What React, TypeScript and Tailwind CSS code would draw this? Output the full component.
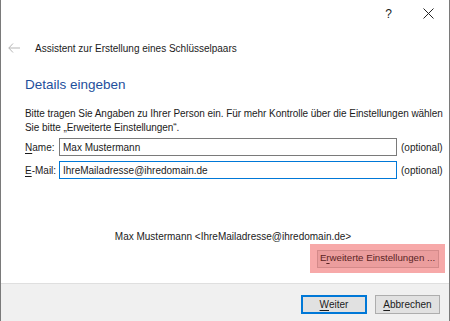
import React from 'react'

const font = { fontFamily: '"Liberation Sans", Arial, sans-serif' }

function Key({ children }: { children: React.ReactNode }) {
  return <span className="underline underline-offset-2">{children}</span>
}

export default function App() {
  return (
    <div
      className="w-[450px] h-[321px] bg-white border-x border-[#7a7a7a] flex flex-col text-[10px] text-[#1b1b1b] overflow-hidden whitespace-nowrap"
      style={font}
    >
      {/* title bar */}
      <div className="h-[26px] flex items-center justify-end pr-[15px] gap-[31px] text-[12px]">
        <span className="leading-none pt-[2px]">?</span>
        <svg width="11" height="11" viewBox="0 0 11 11" className="mt-[1px]">
          <path d="M0.5 0.5 L10.5 10.5 M10.5 0.5 L0.5 10.5" stroke="#222" strokeWidth="1" />
        </svg>
      </div>

      {/* wizard header */}
      <div className="h-[42px] flex items-center pl-[7px] pt-[2px]">
        <svg width="12" height="10" viewBox="0 0 12 10" className="mr-[15px]">
          <path d="M5 0.5 L0.8 5 L5 9.5 M0.8 5 L12 5" stroke="#b5b5b5" strokeWidth="1" fill="none" />
        </svg>
        <span>Assistent zur Erstellung eines Schlüsselpaars</span>
      </div>

      {/* content */}
      <div className="flex-1 flex flex-col px-[24px]">
        <div className="text-[13.5px] text-[#1e4f9c] leading-[20px] mt-[7px]">Details eingeben</div>
        <p className="mt-[12px] leading-[13.5px] tracking-[-0.05px]">
          Bitte tragen Sie Angaben zu Ihrer Person ein. Für mehr Kontrolle über die Einstellungen wählen
          <br />
          Sie bitte „Erweiterte Einstellungen“.
        </p>

        <div className="mt-[4px] flex items-center h-[18px] -mr-[20px]">
          <span className="w-[34px] shrink-0">
            <Key>N</Key>ame:
          </span>
          <div className="w-[338px] h-[18px] shrink-0 border border-[#7a7a7a] px-[3px] flex items-center">
            Max Mustermann
          </div>
          <span className="ml-[4px]">(optional)</span>
        </div>
        <div className="mt-[5px] flex items-center h-[18px] -mr-[20px]">
          <span className="w-[34px] shrink-0">
            <Key>E</Key>-Mail:
          </span>
          <div className="w-[338px] h-[18px] shrink-0 border border-[#0078d7] px-[3px] flex items-center">
            IhreMailadresse@ihredomain.de
          </div>
          <span className="ml-[4px]">(optional)</span>
        </div>

        <div className="mt-[50px] text-center pl-[16px]">
          Max Mustermann &lt;IhreMailadresse@ihredomain.de&gt;
        </div>

        <div className="mt-0 flex justify-end -mr-[20px]">
          <div className="w-[135px] h-[29px] shrink-0 bg-[#f7a9a9] flex items-center justify-center">
            <div className="w-[122px] h-[18px] shrink-0 bg-[#eb9d9d] border border-[#d48a8a] flex items-center justify-center text-[#5a2424] text-[9.7px]">
              E<Key>r</Key>weiterte Einstellungen ...
            </div>
          </div>
        </div>
      </div>

      {/* footer */}
      <div className="h-[38px] bg-[#f0f0f0] border-t border-[#dfdfdf] flex items-center justify-end gap-[8px] pr-[9px] pt-[3px]">
        <div className="w-[66px] h-[19px] bg-[#e1e1e1] border-2 border-[#0078d7] flex items-center justify-center">
          <Key>W</Key>eiter
        </div>
        <div className="w-[65px] h-[19px] bg-[#e1e1e1] border border-[#adadad] flex items-center justify-center">
          <Key>A</Key>bbrechen
        </div>
      </div>
    </div>
  )
}
